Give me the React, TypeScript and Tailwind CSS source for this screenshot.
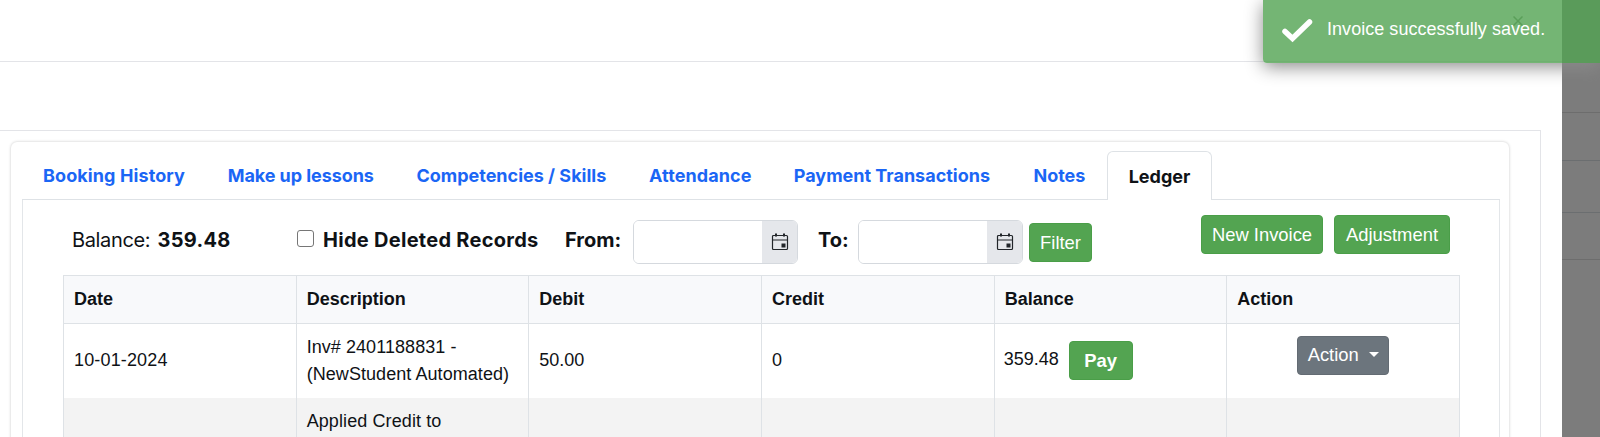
import React from "react";

const tabs = [
  { label: "Booking History", width: "w-[142px] tracking-[0.1px]" },
  { label: "Make up lessons", width: "w-[146px] tracking-[-0.07px]" },
  { label: "Competencies / Skills", width: "w-[190px]" },
  { label: "Attendance", width: "w-[102px] tracking-[0.1px]" },
  { label: "Payment Transactions", width: "w-[197px]" },
  { label: "Notes", width: "w-[52px]" },
];

const columns = ["Date", "Description", "Debit", "Credit", "Balance", "Action"];

const CalendarIcon = () => (
  <svg width="18" height="18" viewBox="0 0 18 18" fill="none" stroke="#212529">
    <rect x="1.5" y="2.5" width="15" height="14" rx="1" strokeWidth="1.2" />
    <path d="M1.5 7h15" strokeWidth="1" />
    <path d="M5 .5v3M13 .5v3" strokeWidth="2" />
    <rect x="10.5" y="10.5" width="4" height="4" fill="#212529" stroke="none" />
  </svg>
);

const DateInput = ({ label }: { label: string }) => (
  <div className="flex h-11 w-[165px] shrink-0 overflow-hidden rounded-md border border-[#d5d9de]">
    <input type="text" aria-label={label} className="min-w-0 flex-1 bg-white px-3 outline-none" />
    <button className="flex w-[35px] items-center justify-center bg-[#e5e7eb]" aria-label={`Pick ${label}`}>
      <CalendarIcon />
    </button>
  </div>
);

const GreenButton = ({ className, children }: { className: string; children: React.ReactNode }) => (
  <button
    className={`flex h-[39px] shrink-0 items-center justify-center rounded-[4px] border border-[#4a9e48] bg-[#53a451] font-['Liberation_Sans',sans-serif] text-[18.4px] text-white ${className}`}
  >
    {children}
  </button>
);

const Toast = () => (
  <div className="absolute right-0 top-0 flex h-[63px] w-[337px] items-center rounded-bl-[4px] bg-[#51a351]/80 pl-[18px] font-['Liberation_Sans',sans-serif] text-lg tracking-[0.04px] text-white shadow-[0_4px_18px_#8c8c8c]">
    <svg width="33" height="26" viewBox="0 0 33 26" fill="none" className="mt-[-4px]">
      <path d="M4 14.5l7.500 7L28.500 5" stroke="#fff" strokeWidth="5.500" strokeLinecap="round" />
    </svg>
    <span className="ml-[13px] mt-[-5px] whitespace-nowrap">Invoice successfully saved.</span>
  </div>
);

const App: React.FC = () => {
  return (
    <div className="relative flex h-[437px] w-full overflow-hidden bg-white font-[Inter,sans-serif] text-[#0f1216]">
      {/* MODAL */}
      <div className="flex w-[1562px] shrink-0 flex-col">
        <div className="h-[62px] shrink-0 border-b border-[#e3e4e8]"></div>
        <div className="mt-[68px] h-[320px] w-[1541px] shrink-0 border-r border-t border-[#e3e4e8] pl-[11px] pt-[11px]">
          <div className="h-[320px] w-[1498px] rounded-md pl-[11px] pr-[9px] pt-[9px] shadow-[0_0_3px_rgba(0,0,0,0.23)]">
            {/* TABS */}
            <nav className="flex h-[49px] text-[18px] font-bold">
              <div className="flex flex-1 items-center gap-[42.7px] border-b border-[#dee2e6] pl-[21px] text-[#1b66f5]">
                {tabs.map((tab) => (
                  <a key={tab.label} className={`shrink-0 whitespace-nowrap ${tab.width}`}>
                    {tab.label}
                  </a>
                ))}
              </div>
              <a className="flex w-[105px] shrink-0 items-center justify-center rounded-t-md border border-b-0 border-[#dee2e6] text-[#0f1216]">
                Ledger
              </a>
              <div className="w-[288px] shrink-0 border-b border-[#dee2e6]"></div>
            </nav>

            <div className="h-[260px] border-x border-[#e3e6e9] pl-[40px] pr-[39px]">
              {/* TOOLBAR */}
              <div className="flex h-[75px] items-start pt-5 text-[20px]">
                <div className="ml-[9px] w-[225px] shrink-0 pt-[5px]">
                  <span className="tracking-[-0.35px]">Balance: </span>
                  <span className="ml-[2px] font-bold tracking-[0.3px]">359.48</span>
                </div>
                <input type="checkbox" aria-label="Hide Deleted Records" className="mt-[10px] size-[17px] shrink-0 appearance-none rounded-[3px] border border-[#767676]" />
                <span className="ml-[9px] w-[242px] shrink-0 whitespace-nowrap pt-[5px] font-bold tracking-[0.28px]">Hide Deleted Records</span>
                <span className="w-[68px] shrink-0 pt-[5px] font-bold">From:</span>
                <DateInput label="from date" />
                <span className="ml-[20px] w-[40px] shrink-0 pt-[5px] font-bold">To:</span>
                <DateInput label="to date" />
                <GreenButton className="ml-[6px] mt-[3px] w-[63px]">Filter</GreenButton>
                <div className="ml-auto mr-[10px] mt-[-5px] flex gap-[11px]">
                  <GreenButton className="w-[122px]">New Invoice</GreenButton>
                  <GreenButton className="w-[116px]">Adjustment</GreenButton>
                </div>
              </div>

              {/* LEDGER TABLE */}
              <div className="w-[1397px] border-l border-t border-[#dee2e6] font-['Liberation_Sans',sans-serif] text-lg leading-[27px]">
                <div className="grid h-[48px] grid-cols-6 border-b border-[#dee2e6] bg-[#f8f9fb] font-bold">
                  {columns.map((column) => (
                    <div key={column} className="flex items-center border-r border-[#dee2e6] pl-[10px]">{column}</div>
                  ))}
                </div>
                <div className="grid h-[74px] grid-cols-6">
                  <div className="flex items-center border-r border-[#dee2e6] pb-[2px] pl-[10px] tracking-[0.15px]">10-01-2024</div>
                  <div className="flex items-center border-r border-[#dee2e6] pl-[10px]">
                    <p className="mt-[-1px] whitespace-nowrap tracking-[0.06px]">Inv# 2401188831 -<br />(NewStudent Automated)</p>
                  </div>
                  <div className="flex items-center border-r border-[#dee2e6] pb-[2px] pl-[10px]">50.00</div>
                  <div className="flex items-center border-r border-[#dee2e6] pb-[2px] pl-[10px]">0</div>
                  <div className="flex items-center border-r border-[#dee2e6] pl-[9px]">
                    <span className="mt-[-3px] w-[65px]">359.48</span>
                    <GreenButton className="mt-[-1px] w-[64px] font-bold">Pay</GreenButton>
                  </div>
                  <div className="flex items-start justify-center border-r border-[#dee2e6] pr-px pt-[12px]">
                    <button className="flex h-[39px] w-[92px] items-center gap-[10px] rounded-[4px] border border-[#636b73] bg-[#6c757d] pb-[2px] pl-[10px] text-[18.4px] text-white">
                      Action
                      <span className="border-x-[5px] border-t-[5px] border-x-transparent border-t-white"></span>
                    </button>
                  </div>
                </div>
                <div className="grid h-[60px] grid-cols-6 bg-[#f3f3f3]">
                  <div className="border-r border-[#dee2e6]"></div>
                  <div className="border-r border-[#dee2e6] pl-[10px] pt-[10px] tracking-[0.1px]">Applied Credit to</div>
                  <div className="border-r border-[#dee2e6]"></div>
                  <div className="border-r border-[#dee2e6]"></div>
                  <div className="border-r border-[#dee2e6]"></div>
                  <div className="border-r border-[#dee2e6]"></div>
                </div>
              </div>
            </div>
          </div>
        </div>
      </div>

      {/* DIMMED PAGE BEHIND THE MODAL */}
      <div className="flex flex-1 flex-col bg-[#7c7c7c]">
        <div className="h-[113px] border-b border-[#6d6d6d]"></div>
        <div className="h-[48px] border-b border-[#6b6e70]"></div>
        <div className="h-[52px] border-b border-[#6b6e70]"></div>
        <div className="h-[47px] border-b border-[#6d6d6d]"></div>
      </div>

      <Toast />
      <svg width="10" height="10" viewBox="0 0 10 10" className="absolute left-[1513px] top-[16px]">
        <path d="M.5.5l9 9M9.500.5l-9 9" stroke="#5a9f59" strokeWidth="1.500" />
      </svg>
    </div>
  );
};

export default App;
